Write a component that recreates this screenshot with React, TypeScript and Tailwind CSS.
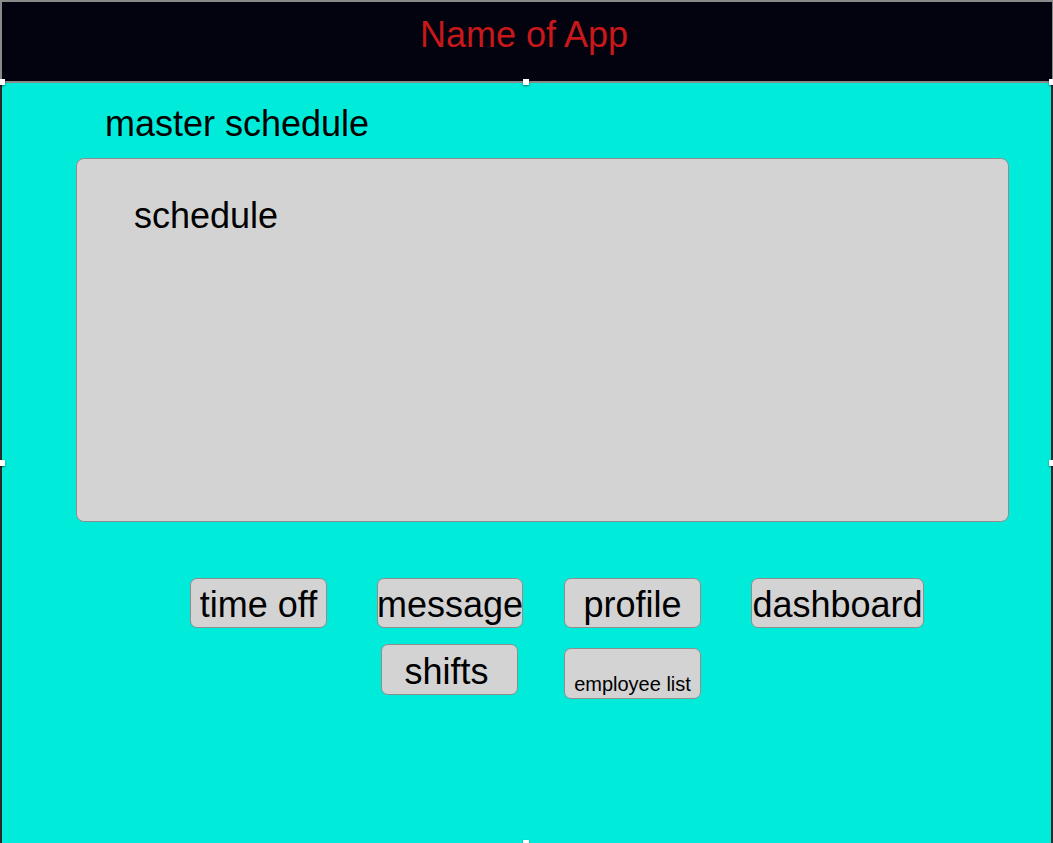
import React from 'react';

const font = { fontFamily: '"Liberation Sans", Arial, sans-serif' };

function NavButton({ label, className }: { label: string; className?: string }) {
  return (
    <button
      className={
        'h-[50px] rounded-[7px] border border-[#8e8e8e] bg-[#d3d3d3] text-[36px] leading-none text-black whitespace-nowrap flex justify-center ' +
        (className ?? '')
      }
    >
      {label}
    </button>
  );
}

// little white selection handles from the mockup tool
function Handle({ className }: { className: string }) {
  return <div className={'absolute bg-white shadow-[0_1px_2px_rgba(0,0,0,0.5)] ' + className} />;
}

export default function App() {
  return (
    <div className="relative w-[1053px] h-[843px] overflow-hidden flex flex-col" style={font}>
      <header className="h-[83px] shrink-0 bg-[#03020f] border-t-2 border-l-2 border-b-2 border-r border-[#8a8a8a] flex justify-center pt-[15px] pr-[6px]">
        <h1 className="text-[36px] leading-none text-[#c8181a]">Name of App</h1>
      </header>

      <main className="flex-1 bg-[#00ebda] border-l-2 border-r-2 border-[#2a2a2a] flex flex-col">
        <div className="ml-[103px] mt-[23px] text-[36px] leading-none text-black">master schedule</div>

        <section className="ml-[74px] mt-[16px] w-[933px] h-[364px] rounded-[8px] border border-[#8e8e8e] bg-[#d3d3d3] pt-[39px] pl-[57px]">
          <div className="text-[36px] leading-none text-black">schedule</div>
        </section>

        <div className="ml-[188px] mt-[56px] grid grid-cols-[187px_187px_187px_187px] gap-y-[16px] items-start">
          <NavButton label="time off" className="w-[137px] pt-[8px]" />
          <NavButton label="message" className="w-[146px] pt-[8px]" />
          <NavButton label="profile" className="w-[137px] pt-[8px]" />
          <NavButton label="dashboard" className="w-[173px] pt-[8px]" />
          <div />
          <NavButton label="shifts" className="w-[137px] ml-[4px] h-[51px] pt-[9px] pr-[6px]" />
          <button className="mt-[4px] w-[137px] h-[51px] rounded-[7px] border border-[#8e8e8e] bg-[#d3d3d3] text-[20px] leading-none text-black whitespace-nowrap flex justify-center pt-[25px]">
            employee list
          </button>
        </div>
      </main>

      <Handle className="left-0 top-[79px] w-[5px] h-[6px]" />
      <Handle className="left-[523px] top-[79px] w-[6px] h-[6px]" />
      <Handle className="left-[1049px] top-[79px] w-[5px] h-[6px]" />
      <Handle className="left-0 top-[460px] w-[5px] h-[6px]" />
      <Handle className="left-[1049px] top-[460px] w-[5px] h-[6px]" />
      <Handle className="left-[523px] top-[840px] w-[6px] h-[6px]" />
    </div>
  );
}
